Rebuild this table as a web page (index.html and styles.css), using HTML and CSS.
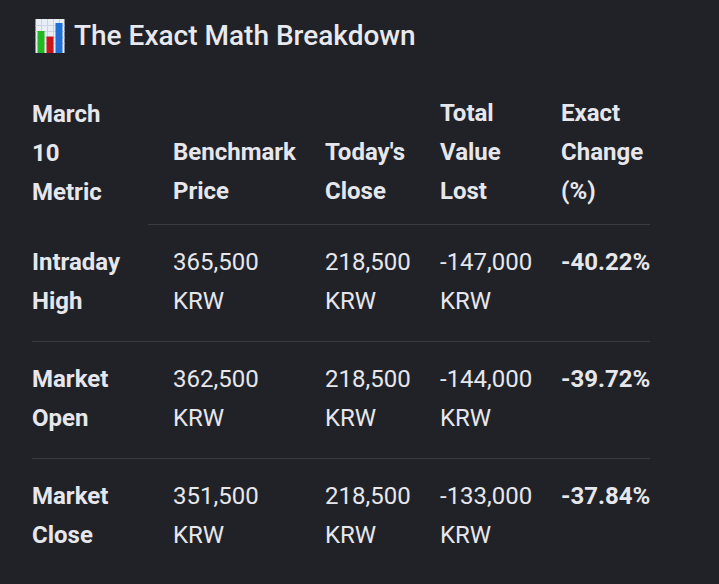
FILE: index.html
```html
<!DOCTYPE html>
<html lang="en">
<head>
<meta charset="utf-8">
<title>The Exact Math Breakdown</title>
<link rel="stylesheet" href="styles.css">
</head>
<body>
<div class="page">
  <h2 class="title">
    <svg class="icon" width="30" height="34" viewBox="0 0 30 34" aria-hidden="true">
      <rect x="0.5" y="0" width="29" height="34" fill="#e9eef6"/>
      <g stroke="#c9d3e2" stroke-width="1">
        <line x1="0.5" y1="6.5" x2="29.5" y2="6.5"/>
        <line x1="0.5" y1="12.5" x2="29.5" y2="12.5"/>
        <line x1="0.5" y1="18.5" x2="29.5" y2="18.5"/>
        <line x1="0.5" y1="24.5" x2="29.5" y2="24.5"/>
        <line x1="6.5" y1="0" x2="6.5" y2="34"/>
        <line x1="12.5" y1="0" x2="12.5" y2="34"/>
        <line x1="18.5" y1="0" x2="18.5" y2="34"/>
        <line x1="24.5" y1="0" x2="24.5" y2="34"/>
      </g>
      <rect x="2.5" y="12" width="7" height="22" fill="#22b822"/>
      <rect x="11.5" y="17.5" width="7" height="16.5" fill="#c8141a"/>
      <rect x="20.5" y="4" width="7" height="30" fill="#1f6fd6"/>
    </svg>
    <span>The Exact Math Breakdown</span>
  </h2>
  <table class="breakdown">
    <colgroup>
      <col class="c1"><col class="c2"><col class="c3"><col class="c4"><col class="c5">
    </colgroup>
    <thead>
      <tr>
        <th class="first">March<br>10<br>Metric</th>
        <th>Benchmark<br>Price</th>
        <th>Today's<br>Close</th>
        <th>Total<br>Value<br>Lost</th>
        <th>Exact<br>Change<br>(%)</th>
      </tr>
    </thead>
    <tbody>
      <tr>
        <td class="metric">Intraday<br>High</td>
        <td>365,500<br>KRW</td>
        <td>218,500<br>KRW</td>
        <td>-147,000<br>KRW</td>
        <td class="pct">-40.22%</td>
      </tr>
      <tr>
        <td class="metric">Market<br>Open</td>
        <td>362,500<br>KRW</td>
        <td>218,500<br>KRW</td>
        <td>-144,000<br>KRW</td>
        <td class="pct">-39.72%</td>
      </tr>
      <tr class="last">
        <td class="metric">Market<br>Close</td>
        <td>351,500<br>KRW</td>
        <td>218,500<br>KRW</td>
        <td>-133,000<br>KRW</td>
        <td class="pct">-37.84%</td>
      </tr>
    </tbody>
  </table>
</div>
</body>
</html>
```

FILE: styles.css
```css
html, body {
  margin: 0;
  padding: 0;
  background: #212227;
}
body {
  color: #e6e7ec;
  font-family: Roboto, "Liberation Sans", Arial, sans-serif;
}
.page {
  padding: 18px 32px 0 32px;
}
.title {
  display: flex;
  align-items: center;
  gap: 9px;
  margin: 0;
  font-size: 28px;
  font-weight: 500;
  line-height: 36px;
  color: #e8e9ee;
}
.icon {
  flex: none;
  margin-left: 3px;
  margin-top: 0;
}
.breakdown {
  margin-top: 40px;
  border-collapse: collapse;
  table-layout: fixed;
  width: 618px;
  font-size: 24px;
  line-height: 39px;
}
.c1 { width: 116px; }
.c2 { width: 152px; }
.c3 { width: 115px; }
.c4 { width: 121px; }
.c5 { width: 114px; }
.breakdown th {
  text-align: left;
  vertical-align: bottom;
  font-weight: 700;
  padding: 0 0 13px 25px;
  border-bottom: 1px solid #3b3c42;
  white-space: nowrap;
}
.breakdown th.first {
  padding-left: 0;
  border-bottom: none;
}
.breakdown td {
  vertical-align: top;
  padding: 18px 0 20px 25px;
  font-weight: 400;
  border-bottom: 1px solid #3b3c42;
  white-space: nowrap;
}
.breakdown tr.last td {
  border-bottom: none;
}
.breakdown td.metric {
  padding-left: 0;
  font-weight: 700;
}
.breakdown td.pct {
  font-weight: 700;
}
```
